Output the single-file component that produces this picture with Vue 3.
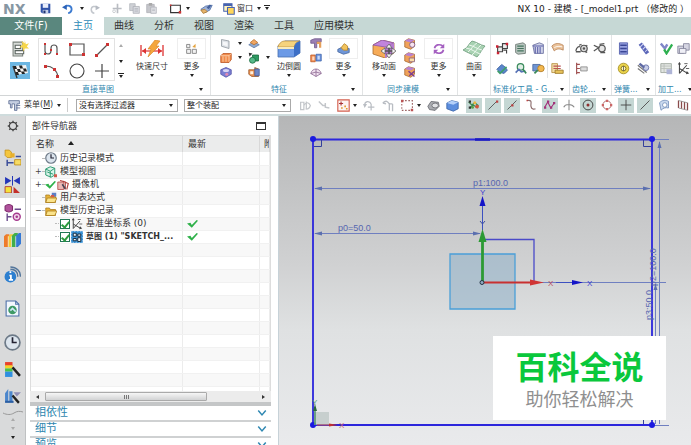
<script setup>
import { h, ref } from 'vue'

const glyphs = {
  save: '<path d="M1 1h14v14H3l-2-2z" fill="#2f52a8"/><path d="M4 1h8v6H4z" fill="#e9eefb"/><path d="M4 10h8v5H4z" fill="#c4cfe8"/><path d="M5 11h3v4H5z" fill="#1d3270"/>',
  undo: '<path d="M4 6c4-4 10-2 10 3 0 3-2 5-5 6" fill="none" stroke="#3b7ad0" stroke-width="2.6"/><path d="M0 6l7-4v8z" fill="#2b62b8"/>',
  redo: '<path d="M12 6C8 2 2 4 2 9c0 3 2 5 5 6" fill="none" stroke="#c3c7cd" stroke-width="2.4"/><path d="M16 6L9 2v8z" fill="#b5bac2"/>',
  cut: '<path d="M8 1v14M1 8h13" stroke="#b9bcc2" stroke-width="2.4"/><circle cx="3" cy="12" r="2" fill="none" stroke="#c9ccd0" stroke-width="1.4"/>',
  copy: '<path d="M1 1h8v10H1z" fill="#cfd1d6" stroke="#aeb1b8"/><path d="M6 5h9v10H6z" fill="#d9dbe0" stroke="#a6a9b0"/><path d="M8 8h5M8 10h5M8 12h5" stroke="#b0b3ba"/>',
  paste: '<path d="M1 2h11v12H1z" fill="#c5c6cb" stroke="#a9abb2"/><path d="M4 0h5v4H4z" fill="#aaa"/><path d="M7 6h8v9H7z" fill="#e2e3e7" stroke="#a9abb2"/><path d="M9 9h4M9 11h4" stroke="#b0b3ba"/>',
  rectTool: '<path d="M2 4h12v9H2z" fill="none" stroke="#333" stroke-width="1.4"/><path d="M1 3h2v2H1zM12 11h3v3h-3z" fill="#c33"/>',
  touch: '<path d="M1 9l6-4 8-1-3 6-6 3z" fill="#9fb3d8" stroke="#506fa8"/><path d="M1 10l5-1 3 3-5 2z" fill="#e7b56b" stroke="#a87a38"/><path d="M8 7l4-4 2 1-3 5z" fill="#45619c"/>',
  windows: '<path d="M1 1h11v10H1z" fill="#fff3bd" stroke="#4763b0" stroke-width="1.4"/><path d="M1 1h11v3H1z" fill="#4763b0"/><path d="M6 6h9v9H6z" fill="#ffd65a" stroke="#4763b0" stroke-width="1.4"/>',
  sketch: '<path d="M1 2h9v13H1z" fill="#d8dcd8" stroke="#7b827c"/><path d="M3 5h5v3H3zM3 10h8v3H3z" fill="#fff" stroke="#5c6560"/><path d="M12 0l1 4 3-1-2 3 2 2-4 0-1 3-1-4-3 0 3-3-1-3 3 2z" fill="#f6d64a"/>',
  flag: '<path d="M0 0h20v17H0z" fill="#6cb6e2"/><path d="M3 4l13-1 2 8-12 2z" fill="#f4f4f4"/><path d="M3 4l3 0 1 3-3 0zM9 3.500h3l1 3h-3zM7 7h3l1 3H8zM13 6.500h3l1 3h-3zM5 10h3l1 3H6zM11 9.500h3l1 2.500h-3z" fill="#222"/><path d="M3 4l4 12" stroke="#333" stroke-width="1.300"/>',
  profile: '<path d="M1 2v7c0 4 6 4 6 0V6c0-4 6-4 6 0v6" fill="none" stroke="#555" stroke-width="1.200"/><path d="M0 1h2v2H0zM0 11h2v2H0zM6 7h2v2H6zM12 11h2v2h-2z" fill="#c33"/>',
  rect: '<path d="M1 2h14v11H1z" fill="none" stroke="#555" stroke-width="1.200"/><path d="M0 1h3v3H0zM13 11h3v3h-3z" fill="#c33"/>',
  line: '<path d="M2 14L14 2" stroke="#555" stroke-width="1.200"/><path d="M1 12h3v3H1zM12 1h3v3h-3z" fill="#c33"/>',
  arc: '<path d="M2 3c6 0 11 4 12 11" fill="none" stroke="#555" stroke-width="1.200"/><path d="M0 2h3v3H0zM9 5h3v3H9zM12 12h3v3h-3z" fill="#c33"/>',
  circle: '<circle cx="8" cy="8" r="7" fill="none" stroke="#444" stroke-width="1.100"/>',
  plus: '<path d="M8 1v14M1 8h14" stroke="#444" stroke-width="1.200"/>',
  dim: '<path d="M1 5v11M23 5v11" stroke="#d33" stroke-width="1.300"/><path d="M2 11h20" stroke="#d33" stroke-width="1.200"/><path d="M2 11l4-3v6zM22 11l-4-3v6z" fill="#d33"/><path d="M15 0l5 1-4 5 3 0-11 11 3-8-3 0z" fill="#f4a63d" stroke="#d78222" stroke-width=".6"/>',
  more1: '<path d="M2 3h4v4H2zM2 9h5v5H2zM9 9h5v5H9z" fill="#f2f2f2" stroke="#777"/><path d="M9 6l4-4v5z" fill="#e4a23c"/>',
  more2: '<path d="M1 9l6-3 8 2v5l-7 2-7-3z" fill="#6f96d8" stroke="#47679e"/><path d="M5 7l4-5 4 3v5l-5 0z" fill="#f2c35c" stroke="#b58428"/>',
  more3: '<path d="M2 7c1-5 7-6 11-3M14 9c-1 5-7 6-11 3" fill="none" stroke="#a45fc0" stroke-width="2.200"/><path d="M15 1v6H9zM1 15V9h6z" fill="#a45fc0"/>',
  plane: '<path d="M2 2l10 2v10L2 11z" fill="#dfe3e8" stroke="#8a9098"/><path d="M4 5l6 1v5L4 9z" fill="#f6f7f9"/>',
  extrude: '<path d="M1 5l3-3h11v8l-3 4H1z" fill="#f08a4a" stroke="#b8501e"/><path d="M4 6v7M8 6v7M12 5v8M1 5h11l3-3" stroke="#ffe0c4" fill="none"/>',
  hole: '<path d="M1 5l7-3 7 3v6l-7 4-7-4z" fill="#7b7fd2" stroke="#4d4fa4"/><ellipse cx="8" cy="6" rx="4" ry="2" fill="#d9d7f5"/><circle cx="9" cy="11" r="2" fill="#e28bb4"/>',
  layer: '<path d="M1 9l7-4 7 4-7 4z" fill="#8fa9cf" stroke="#5b77a4"/><path d="M3 6l5-4 5 4-5 3z" fill="#f0a764" stroke="#b66d2c"/>',
  unite: '<path d="M6 4h8v8H6z" fill="#2d9a62" stroke="#14663a"/><circle cx="6" cy="11" r="4" fill="#57b98a" stroke="#14663a"/><path d="M1 1l5 1-4 4z" fill="#333"/>',
  shell: '<path d="M1 5h8V2l5 2v10H5l-4-3z" fill="#e58b4c" stroke="#9a5a2c"/><path d="M9 4h6v9H9z" fill="#6d86c6" stroke="#435a98"/><path d="M3 7h4v4H3z" fill="#fff1de"/>',
  edge: '<path d="M1 6l7-5h15v12l-6 4H1z" fill="#6c9ae6" stroke="#466fae" stroke-width=".8"/><path d="M1 6c3-5 5-5 8-5h14c-4 1-5 3-6 6H1z" fill="#f6d37d" stroke="#b4893c" stroke-width=".7"/><path d="M17 7c1-3 3-5 6-6v12l-6 4z" fill="#3c6fc6"/><path d="M1 7h16v2H1z" fill="#f9eabb"/>',
  draft: '<path d="M1 3l5-2h9v4H9v8H6V7H1z" fill="#9a7fb4" stroke="#6a5488"/><path d="M9 5h6v8h-3V8H9z" fill="#e5a05c"/>',
  mirror: '<path d="M1 4h6v9H1z" fill="#f08d54" stroke="#b8541e"/><path d="M8 3h7v9H8z" fill="#6b93dd" stroke="#3d63a8"/><path d="M3 6h3v5H3z" fill="#ffd9be"/><path d="M10 5h3v5h-3z" fill="#c8dafa"/>',
  tube: '<path d="M1 10c2-8 12-8 14 0l-7 4z" fill="#f1e2f0" stroke="#86608c"/><path d="M8 4v10M1 10l7-2 7 2" stroke="#86608c" fill="none"/>',
  move: '<path d="M1 5l9-5 12 3v10l-9 5-12-4z" fill="#f6ab58" stroke="#a86a2e" stroke-width=".8"/><path d="M1 5l9-5 12 3-9 4z" fill="#c184dc" stroke="#8d57a8" stroke-width=".8"/><path d="M13 7l9-4v10l-9 5z" fill="#b57ad0"/><path d="M11 11h12M17 5v12" stroke="#555" stroke-width="1.600"/><path d="M24 11l-4-3v6zM9 11l4-3v6zM17 4l-3 4h6zM17 18l-3-4h6z" fill="#f4f4f4" stroke="#555" stroke-width=".7"/>',
  cubeA: '<path d="M1 4l5-3 8 2v8l-5 4-8-3z" fill="#f0a25a" stroke="#a4652c"/><path d="M1 4l5-3 8 2-5 3z" fill="#b982d2"/><circle cx="11" cy="9" r="3.500" fill="#f7e3ee" stroke="#6d4a7c"/>',
  cubeB: '<path d="M1 4l5-3 8 2v8l-5 4-8-3z" fill="#f0a25a" stroke="#a4652c"/><path d="M1 4l5-3 8 2-5 3z" fill="#b982d2"/><path d="M7 8h7v5H7z" fill="#f9dca8" stroke="#80577e"/>',
  cubeC: '<path d="M1 4l5-3 8 2v8l-5 4-8-3z" fill="#f0a25a" stroke="#a4652c"/><path d="M1 4l5-3 8 2-5 3z" fill="#b982d2"/><path d="M6 7l8 7M14 7l-7 6" stroke="#7b3e90" stroke-width="2"/>',
  surface: '<path d="M1 10C6 8 7 3 10 1c5 1 8 4 13 5-3 3-5 8-8 11-5-3-9-4-14-7z" fill="#a8d2b2" stroke="#6c9b7b" stroke-width=".8"/><path d="M4 8c6 1 9 4 14 6M7 5c5 1 8 4 13 5M6 12c4-3 5-7 9-9M10 15c4-3 5-7 9-10" fill="none" stroke="#eef8f0"/>',
  g1: '<path d="M2 6h6v6H2zM8 2h6v6H8z" fill="#eee" stroke="#444" stroke-width="1.400"/><path d="M0 4h3v3H0zM12 1h3v3h-3zM1 12h3v3H1z" fill="#c23"/><path d="M9 10h4v4" stroke="#444" fill="none" stroke-width="1.400"/>',
  g2: '<path d="M2 3l9-2 3 2v11l-9 1-3-2z" fill="#b9c6c0" stroke="#66736c"/><path d="M4 5h8M4 8h8M4 11h8" stroke="#43735c" stroke-width="1.400"/>',
  g3: '<path d="M1 4l8-3 5 2v11H3z" fill="#cfd3e8" stroke="#666b9b"/><path d="M4 6v8M7 6v8M10 6v8M1 5h13" stroke="#5b5fa8" stroke-width="1.300"/>',
  g4: '<path d="M1 5c4-4 9-4 14-1v6c-4-2-8-2-11 1z" fill="#eac29a" stroke="#b98356"/><path d="M4 7c3-2 6-2 10-1" stroke="#fff" fill="none"/>',
  g5: '<path d="M1 9l6-6 4 3 3 4-4 4-5-1z" fill="#5a86cc" stroke="#3b5f9c"/><path d="M2 11l3 3 8-8" fill="none" stroke="#3fa06a" stroke-width="2"/>',
  g6: '<circle cx="8" cy="6" r="4" fill="#dfeee4" stroke="#37895a" stroke-width="1.500"/><path d="M2 13l4-4 3 3 5-1" stroke="#5772b5" stroke-width="2" fill="none"/><path d="M11 9l4 5" stroke="#37895a" stroke-width="2"/>',
  g7: '<path d="M1 3h9v8H1z" fill="#6f94d3" stroke="#45659c"/><circle cx="11" cy="8" r="4" fill="#f2b84f" stroke="#b07a24"/><path d="M3 14l4-4" stroke="#3a8a58" stroke-width="2.200"/>',
  g8: '<path d="M1 2h7v11H1z" fill="#f3dfa8" stroke="#b58b3a"/><path d="M3 5h9M3 8h9" stroke="#b55" stroke-width="1.400"/><path d="M5 10h10v4H5z" fill="#e7c25a" stroke="#997526"/>',
  gear: '<circle cx="11" cy="8" r="4" fill="#ddd" stroke="#555" stroke-width="1.500"/><circle cx="11" cy="8" r="1.500" fill="#555"/><path d="M1 11c1-4 3-6 5-5M5 4l3-1M14 4l1 1M13 13l2-1M1 12h6" stroke="#555" stroke-width="1.600" fill="none"/>',
  gear2: '<circle cx="11" cy="8" r="4" fill="#e6e6e6" stroke="#555" stroke-width="1.500"/><path d="M1 4l6 3-6 4M8 3l6-1M9 13h6" stroke="#555" stroke-width="1.600" fill="none"/>',
  rack: '<path d="M2 1v14M2 3h4M2 8h4M2 13h4" stroke="#a05050" stroke-width="1.400"/><path d="M7 6h8v5H7z" fill="#ddd" stroke="#888"/>',
  spring1: '<path d="M3 1h10v14H3z" fill="#98a2e0" stroke="#4b57a8"/><path d="M4 4h8M4 8h8M4 12h8" stroke="#3b4796" stroke-width="1.800"/>',
  spring2: '<path d="M4 2l9 12" stroke="#5b66b8" stroke-width="5"/><path d="M4 6l4-4M7 9l4-4M10 12l4-4" stroke="#d4d8f6" stroke-width="1.300"/>',
  spring3: '<circle cx="8" cy="8" r="6.500" fill="#e9d24c" stroke="#a18a1c"/><circle cx="8" cy="8" r="3" fill="#fff6b8" stroke="#72620f"/><path d="M8 5v6" stroke="#555"/>',
  spring4: '<path d="M1 4l11 9M1 8l8 6" stroke="#777" stroke-width="1.500"/><circle cx="11" cy="7" r="3.500" fill="#c7cde8" stroke="#5e69a4"/><path d="M3 2l6 5" stroke="#5e69a4" stroke-width="3"/>',
  vcheck: '<path d="M1 2l5 6 3-5" fill="none" stroke="#8187c8" stroke-width="3"/><path d="M5 9l3 5 7-11" fill="none" stroke="#2eb050" stroke-width="2.800"/>',
  parts: '<path d="M1 5h7v9H1zM8 2h7v8H8z" fill="#d5d5e2" stroke="#83839a"/><path d="M3 8h8v6H3z" fill="#efeff6" stroke="#83839a"/>',
  list: '<path d="M1 2h13v11H1z" fill="#e2e6e2" stroke="#98a098"/><path d="M1 5h13M1 8h13M5 2v11" stroke="#b7bdb7"/><path d="M8 9h7v6H8z" fill="#aeb4d6"/>',
  axes: '<path d="M3 1v13M3 14l9-10M3 8l10 6" stroke="#444" stroke-width="1.300" fill="none"/><path d="M1 3l2-3 2 3zM12 11l3 3-4 1z" fill="#444"/><path d="M9 2h4M11 8h4" stroke="#444"/>',
  menu: '<path d="M1 2h13v4h-3v8H8V6H5v5H3V6H1z" fill="#c7d0e2" stroke="#5d6d92"/><path d="M10 8h5M10 11h5" stroke="#5d6d92"/>',
  s1: '<path d="M2 4h4v9H2zM9 3v10M6 8c3-5 6-4 8 0-1 4-4 5-6 4" fill="none" stroke="#c3c6ca" stroke-width="1.500"/>',
  s2: '<path d="M1 3l5 5h3M9 5v5l5 1" fill="none" stroke="#c3c6ca" stroke-width="1.800"/>',
  s3: '<path d="M1 1h14v14H1z" fill="#fdf3f1" stroke="#d4604f" stroke-width="1.400"/><path d="M5 3v5M2.500 5.500h5" stroke="#a33" stroke-width="1.400"/><path d="M9 8h2v2H9zM11 11h2v2h-2zM5 10h2v2H5z" fill="#e09a2c"/>',
  s4: '<path d="M2 8c0-6 6-6 8-2M10 6v8M6 10h8" fill="none" stroke="#b9bdc3" stroke-width="1.500"/><path d="M0 6h5L2 11z" fill="#b9bdc3"/>',
  s5: '<path d="M1 5c4-4 6-2 8 1M1 5l4 1M9 5v9M13 6v9M9 6h4" fill="none" stroke="#b9bdc3" stroke-width="1.600"/>',
  s6: '<path d="M1 2h13v12H1z" fill="none" stroke="#9a6161" stroke-width="1.300" stroke-dasharray="2 2"/><path d="M0 1h3v3H0zM12 12h3v3h-3z" fill="#b55"/>',
  s7: '<path d="M1 9l4-6 9 1 1 5-5 5-7-1z" fill="#a9abb0" stroke="#66686e"/><ellipse cx="10" cy="8" rx="4" ry="3" fill="#e1e2e5" stroke="#66686e"/>',
  s8: '<path d="M1 5l6-3 8 2v8l-6 3-8-3z" fill="#5c8ede" stroke="#3762a8"/><path d="M1 5l6-3 8 2-6 3z" fill="#b4d0fa"/>',
  snap: '<path d="M1 4l4 4 4-3 5 4M2 12l5-4 6 4" stroke="#3b8a4e" stroke-width="1.600" fill="none"/><path d="M1 2h3v3H1zM1 10h3v3H1z" fill="#333"/><circle cx="9" cy="5" r="2" fill="#e9b93d"/><circle cx="12" cy="10" r="2.500" fill="#d4553d"/><circle cx="6" cy="11" r="2" fill="#5aa04c"/>',
  endpt: '<path d="M2 14L13 3" stroke="#555" stroke-width="1.200"/><path d="M12 2h3v3h-3z" fill="#b44"/>',
  midpt: '<path d="M2 14L14 2" stroke="#555" stroke-width="1.200"/><path d="M7 7h3v3H7z" fill="#b44"/>',
  ctrl: '<path d="M3 2c8-1 4 4 5 8s4 4 6 3" fill="none" stroke="#8a6a6a" stroke-width="1.500"/><path d="M2 1h2v2H2z" fill="#b44"/>',
  pole: '<path d="M1 11l4-7 4 8 5-7" fill="none" stroke="#a2327a" stroke-width="1.500"/><path d="M0 10h3v3H0zM4 2h3v3H4zM8 10h3v3H8zM12 4h3v3h-3z" fill="#a2327a"/>',
  inter: '<path d="M8 1v14M1 11c2-5 11-5 14 0" fill="none" stroke="#8a8a8a" stroke-width="1.400"/>',
  center: '<circle cx="8" cy="8" r="6.500" fill="none" stroke="#444" stroke-width="1.300"/><circle cx="8" cy="8" r="2" fill="#8e3030"/>',
  quad: '<circle cx="8" cy="8" r="5.500" fill="none" stroke="#a66" stroke-width="1.200"/><path d="M6.500 1h3v3h-3zM6.500 12h3v3h-3zM1 6.500h3v3H1zM12 6.500h3v3h-3z" fill="#c66"/>',
  face: '<path d="M2 5c4-4 8-4 12-2v9c-4-1-7 0-10 3z" fill="#c9d9ef" stroke="#6a87b4"/><circle cx="9" cy="8" r="3" fill="#fff" stroke="#6a87b4"/>',
  slash: '<path d="M2 14L14 2" stroke="#555" stroke-width="1.300"/>',
  grid: '<path d="M2 2v10M6 3v10M10 4v10M14 5v10" stroke="#8a4b4b" stroke-width="1.700"/><path d="M2 2l12 3M2 12l12 3" stroke="#888"/>',
  cog: '<circle cx="8" cy="8" r="4.800" fill="none" stroke="#444" stroke-width="1.600"/><path d="M8 1v2.500M8 12.500V15M1 8h2.500M12.500 8H15M3 3l2 2M11 11l2 2M13 3l-2 2M5 11l-2 2" stroke="#444" stroke-width="1.800"/>',
  asm: '<path d="M1 1h4l2 2v5H3L1 6z" fill="#f4c63e" stroke="#c08c17" stroke-width=".7"/><path d="M3 10v6M3 13h6M11 7h5" stroke="#3d4f9a" stroke-width="1.400"/><path d="M10 10h6v5h-6z" fill="#f6dc66" stroke="#c08c17" stroke-width=".8"/><path d="M6 4h4v4H6z" fill="#e8b02c"/>',
  constr: '<path d="M1 1l6 3.500L1 8zM15 1L9 4.500 15 8z" fill="#2335b8"/><path d="M8 0v9" stroke="#2335b8"/><path d="M1 10h6v6H1z" fill="#f4e23a" stroke="#a33" stroke-width=".8"/><path d="M9 10l6 6H9z" fill="#c4302a"/>',
  nav: '<path d="M1 2c2-2 5-2 7 0v4c-2 2-5 2-7 0z" fill="#b0529c" stroke="#7e2c6c"/><path d="M10 5h6M3 9v7M3 12h4" stroke="#6b4a8c" stroke-width="1.300"/><circle cx="12" cy="12" r="3.300" fill="#f1d6ea" stroke="#a63a8e" stroke-width="1.300"/><circle cx="12" cy="12" r="1.200" fill="#a63a8e"/>',
  books: '<path d="M0 4l2-2h3v12H0z" fill="#ee7b2a"/><path d="M4 4l2-2h4v12H4z" fill="#f0cc3a"/><path d="M7 4l3-3h3v13H7z" fill="#3fae4b"/><path d="M11 4l3-3h2v10l-3 3h-2z" fill="#3479d6"/><path d="M4 4v10M7 4v10M11 4v10" stroke="#fff" stroke-width=".6"/>',
  web: '<circle cx="6" cy="10" r="5.500" fill="#2c7fd0"/><path d="M6 5v1.500M5 9h1.500v4M4.500 13h4" stroke="#fff" stroke-width="1.700"/><path d="M6 3c5 0 7 3 7 7M6 1c6 0 9.500 4 9.500 9" stroke="#55779c" stroke-width="1.300" fill="none"/>',
  page: '<path d="M2 1h9l3 3v11H2z" fill="#f2f7fd" stroke="#4c6fa8"/><path d="M11 1v3h3" fill="none" stroke="#4c6fa8"/><circle cx="8" cy="9.500" r="4" fill="#3f9a66"/><path d="M6 10l2-2 3 3" stroke="#cfe8f7" stroke-width="1.500" fill="none"/>',
  clock: '<circle cx="8" cy="8" r="7" fill="#dce5ee" stroke="#6d7a88" stroke-width="1.600"/><path d="M8 3v5h4" fill="none" stroke="#223" stroke-width="1.600"/>',
  palette: '<path d="M1 1h7v4H1z" fill="#e8402c"/><path d="M1 4h7v3H1z" fill="#f3d32c"/><path d="M1 7h7v3H1z" fill="#49c148"/><path d="M1 10h7v5H1z" fill="#2f8fe0"/><path d="M8 6l7 8" stroke="#222" stroke-width="2.300"/>',
  tools: '<path d="M1 13V5l3-4v12zM5 13V3h3v10z" fill="#4b86cc"/><path d="M9 4h7l-4 4z" fill="#8f8fb8"/><path d="M8 7l6 7" stroke="#222" stroke-width="2.200"/><path d="M1 13h8" stroke="#2c5fa4" stroke-width="2"/>',
  view: '<path d="M1 4l6-3 6 2v9l-5 3-7-3z" fill="#d9f3e8" stroke="#2c9a72" stroke-width="1.300"/><path d="M1 4l6 3 6-4M7 7v8M3 8l8 3" fill="none" stroke="#2c9a72" stroke-width="1.300"/><path d="M12 11h4v4h-4z" fill="#d25a4c"/>',
  camera: '<path d="M1 4h8v10H1z" fill="#e9b7b5" stroke="#b0403c"/><path d="M4 2l7 2v10M8 3l7 3-2 8" fill="none" stroke="#b0403c" stroke-width="1.500"/><path d="M7 7l4 6" stroke="#445" stroke-width="2"/>',
  folder: '<path d="M1 4h5l1 2h7v8H1z" fill="#e9b53a" stroke="#a87a1a"/><path d="M3 8h13l-3 6H1z" fill="#fbe38a" stroke="#a87a1a"/>',
  expr: '<path d="M1 4h5l1 2h7v8H1z" fill="#e9b53a" stroke="#a87a1a"/><path d="M3 8h13l-3 6H1z" fill="#fbe38a" stroke="#a87a1a"/><path d="M9 1h6v5H9z" fill="#5d7fc4"/><path d="M8 4h4v3H8z" fill="#d25a4c"/>',
  skt: '<path d="M0 0h16v16H0z" fill="#3b91d4"/><path d="M3 3h4v4H3zM9 4h4v3H9zM3 10h4v3H3zM9 9h4v5H9z" fill="#e9f4fc" stroke="#123" stroke-width="1.200"/><path d="M0 0h16v16H0z" fill="none" stroke="#fff" stroke-dasharray="2 2"/>',
  tick: '<path d="M0 8l5-1 2 3 7-7 2 1-9 10z" fill="#2fb14a"/>',
  chev: '<path d="M2 4l6 7 6-7" fill="none" stroke="#2f88b2" stroke-width="2.400"/>',
}

const Icon = (p) =>
  h('svg', {
    width: p.w || 12,
    height: p.h || p.w || 12,
    viewBox: p.box || '0 0 16 16',
    'aria-hidden': 'true',
    innerHTML: glyphs[p.name],
  })
Icon.props = ['name', 'w', 'h', 'box']

const tabs = ['主页', '曲线', '分析', '视图', '渲染', '工具', '应用模块']
const active = ref('主页')

const gallery = ['profile', 'rect', 'line', 'arc', 'circle', 'plus']
const smallGroups = [
  { id: 'std', label: '标准化工具 - G...', cells: ['g1', 'g2', 'g3', 'g4', 'g5', 'g6', 'g7', 'g8'] },
  { id: 'gears', label: '齿轮...', cells: ['gear', 'gear2', 'rack'] },
  { id: 'springs', label: '弹簧...', cells: ['spring1', 'spring2', 'spring3', 'spring4'] },
  { id: 'mach', label: '加工...', cells: ['vcheck', 'parts', 'list', 'axes'] },
]
const filters = [
  { icon: 's1', label: '重置过滤器' },
  { icon: 's2', label: '全不选' },
  { icon: 's3', label: '常规选择', menu: true },
  { icon: 's4', label: '上一个' },
  { icon: 's5', label: '查找' },
  { icon: 's6', label: '矩形选择', menu: true },
  { icon: 's7', label: '高亮隐藏边' },
  { icon: 's8', label: '着色' },
]
const snaps = [
  ['snap', 1], ['endpt', 1], ['midpt', 1], ['ctrl', 0], ['pole', 1], ['inter', 0],
  ['center', 1], ['quad', 0], ['plus', 1], ['slash', 1], ['face', 0], ['grid', 0],
]
const rail = ['cog', 'asm', 'constr', 'nav', 'books', 'web', 'page', 'clock', 'palette', 'tools']
const rows = [
  { icon: 'clock', text: '历史记录模式', mark: '' },
  { icon: 'view', text: '模型视图', mark: '+' },
  { icon: 'camera', text: '摄像机', mark: '+', tick: true },
  { icon: 'expr', text: '用户表达式', mark: '' },
  { icon: 'folder', text: '模型历史记录', mark: '−' },
  { icon: 'axes', text: '基准坐标系 (0)', child: true },
  { icon: 'skt', text: '草图 (1) "SKETCH_...', child: true, bold: true },
]
const sections = ['相依性', '细节', '预览']
</script>

<template>
  <div class="app">
    <header class="title">
      <span class="logo">NX</span>
      <div class="quick">
        <button aria-label="保存"><Icon name="save" w="11" /></button>
        <button aria-label="撤销"><Icon name="undo" w="11" /><i class="caret" /></button>
        <button aria-label="重做"><Icon name="redo" w="10" /></button>
        <button aria-label="剪切"><Icon name="cut" w="11" /></button>
        <button aria-label="复制"><Icon name="copy" w="11" /></button>
        <button aria-label="粘贴"><Icon name="paste" w="11" /></button>
        <button aria-label="矩形"><Icon name="rectTool" w="13" /><i class="caret" /></button>
        <button aria-label="触控"><Icon name="touch" w="13" /></button>
        <button class="win"><Icon name="windows" w="12" /><span>窗口</span><i class="caret" /><i class="caret lined" /></button>
      </div>
      <h1>NX 10 - 建模 - [_model1.prt （修改的 ）</h1>
    </header>

    <nav class="tabs">
      <button class="file">文件(F)</button>
      <button v-for="t in tabs" :key="t" :class="{ on: t === active }" @click="active = t">{{ t }}</button>
    </nav>

    <div class="ribbon">
      <section class="group direct">
        <div class="tools">
          <div class="stack two">
            <button aria-label="草图"><Icon name="sketch" w="17" /></button>
            <button aria-label="完成草图"><Icon name="flag" w="20" h="17" box="0 0 20 17" /></button>
          </div>
          <div class="gallery">
            <button v-for="g in gallery" :key="g" :aria-label="g"><Icon :name="g" w="16" /></button>
          </div>
          <div class="scroll"><i class="caret up" /><i class="caret" /><i class="caret lined" /></div>
          <button class="big"><Icon name="dim" w="24" h="18" box="0 0 24 18" />快速尺寸<i class="caret" /></button>
          <button class="big more"><span><Icon name="more1" w="13" /></span>更多<i class="caret" /></button>
        </div>
        <footer>直接草图<i class="caret" /></footer>
      </section>

      <section class="group feature">
        <div class="tools">
          <div class="stack">
            <button aria-label="基准平面"><Icon name="plane" /><i class="caret" /></button>
            <button aria-label="拉伸"><Icon name="extrude" /><i class="caret" /></button>
            <button aria-label="孔"><Icon name="hole" /></button>
          </div>
          <div class="stack">
            <button aria-label="阵列"><Icon name="layer" /></button>
            <button aria-label="合并"><Icon name="unite" /><i class="caret" /></button>
            <button aria-label="抽壳"><Icon name="shell" /></button>
          </div>
          <button class="big"><Icon name="edge" w="24" h="18" box="0 0 24 18" />边倒圆<i class="caret" /></button>
          <div class="stack">
            <button aria-label="拔模"><Icon name="draft" /></button>
            <button aria-label="镜像"><Icon name="mirror" /></button>
            <button aria-label="管"><Icon name="tube" /></button>
          </div>
          <button class="big more"><span><Icon name="more2" w="13" /></span>更多<i class="caret" /></button>
        </div>
        <footer>特征<i class="caret" /></footer>
      </section>

      <section class="group sync">
        <div class="tools">
          <button class="big"><Icon name="move" w="24" h="18" box="0 0 24 18" />移动面<i class="caret" /></button>
          <div class="stack">
            <button aria-label="偏置"><Icon name="cubeA" /></button>
            <button aria-label="替换"><Icon name="cubeB" /></button>
            <button aria-label="删除"><Icon name="cubeC" /></button>
          </div>
          <button class="big more"><span><Icon name="more3" w="12" /></span>更多<i class="caret" /></button>
        </div>
        <footer>同步建模<i class="caret" /></footer>
      </section>

      <section class="group surf">
        <div class="tools">
          <button class="big"><Icon name="surface" w="24" h="18" box="0 0 24 18" />曲面<i class="caret" /></button>
        </div>
      </section>

      <section v-for="g in smallGroups" :key="g.id" class="group small" :class="g.id">
        <div class="tools">
          <button v-for="c in g.cells" :key="c" :aria-label="c"><Icon :name="c" w="13" /></button>
        </div>
        <footer>{{ g.label }}<i class="caret" /></footer>
      </section>
    </div>

    <div class="selection">
      <button class="menu"><Icon name="menu" w="13" />菜单(<u>M</u>)<i class="caret" /></button>
      <label class="pick"><select aria-label="过滤器"><option>没有选择过滤器</option></select><i class="caret" /></label>
      <label class="pick"><select aria-label="范围"><option>整个装配</option></select><i class="caret" /></label>
      <div class="filters">
        <button v-for="f in filters" :key="f.icon" :aria-label="f.label"><Icon :name="f.icon" w="13" /><i v-if="f.menu" class="caret" /></button>
      </div>
      <div class="snaps">
        <button v-for="s in snaps" :key="s[0]" :class="{ on: s[1] }" :aria-label="s[0]"><Icon :name="s[0]" w="12" /></button>
      </div>
    </div>

    <main>
      <aside class="rail">
        <button v-for="r in rail" :key="r" :class="['r-' + r]" :aria-label="r"><Icon :name="r" :w="r === 'cog' ? 12 : 17" /></button>
        <svg class="wave" width="22" height="5" viewBox="0 0 22 5"><path d="M1 3c4 2 8 2 11 0s6-2 9-1" fill="none" stroke="#999" /></svg>
        <i class="caret up" /><i class="caret dim" /><i class="caret" />
      </aside>

      <section class="panel">
        <h2>部件导航器<button class="dock" aria-label="停靠" /></h2>
        <div class="tree">
          <table>
            <colgroup><col /><col class="c2" /><col class="c3" /></colgroup>
            <thead>
              <tr><th>名称<i class="caret sort" /></th><th>最新</th><th>附</th></tr>
            </thead>
            <tbody>
              <tr v-for="r in rows" :key="r.text">
                <td>
                  <div class="node" :class="{ child: r.child, bold: r.bold }">
                    <span v-if="!r.child" class="mark">{{ r.mark }}</span>
                    <span class="twig" />
                    <input v-if="r.child" type="checkbox" checked :aria-label="r.text" />
                    <Icon v-if="r.tick" name="tick" w="11" />
                    <Icon :name="r.icon" w="12" />
                    <span class="name">{{ r.text }}</span>
                  </div>
                </td>
                <td><Icon v-if="r.child" name="tick" w="11" /></td>
                <td></td>
              </tr>
              <tr v-for="n in 14" :key="n"><td></td><td></td><td></td></tr>
            </tbody>
          </table>
        </div>
        <div class="hbar"><i class="side left" /><div class="track"><span class="thumb"><b /><b /><b /></span></div><i class="side right" /></div>
        <div class="sections">
          <button v-for="s in sections" :key="s">{{ s }}<Icon name="chev" w="10" /></button>
        </div>
      </section>

      <section class="view">
        <svg class="canvas" viewBox="279 116 412 329" preserveAspectRatio="xMinYMin meet">
          <g fill="none" stroke="#6f7fc0" stroke-width="1">
            <path d="M315 188.500H650M315 233.500H480M484 282.500H666M655.500 284V424M659.500 142V424M654 139.500h15M654 425.500h15" />
          </g>
          <path d="M450 254h65v55h-65z" fill="#8fb0c8" fill-opacity=".55" stroke="#4a9fd8" stroke-width="1.300" />
          <path d="M484 239.500h50V282" fill="none" stroke="#4a4ac8" stroke-width="1.300" />
          <g fill="#5b6fae">
            <path d="M314 188.500l8-2v4zM651 188.500l-8-2v4zM314 233.500l8-2v4zM481 233.500l-8-2v4zM659.500 141l-2 7h4zM655.500 284l-2 6h4z" />
          </g>
          <path d="M313 139.500H652V425H313z" fill="none" stroke="#2c26dc" stroke-width="1.800" />
          <path d="M475 139.500h15" stroke="#1a1ac0" stroke-width="2.500" />
          <path d="M321.500 140v6.500H314M643.500 140v6.500H651M643.500 424v-7" fill="none" stroke="#34409c" />
          <g fill="#1a1ae0"><circle cx="313" cy="139" r="3" /><circle cx="652" cy="139" r="3" /><circle cx="313" cy="425" r="3" /><circle cx="652" cy="425" r="3" /></g>
          <g class="dims">
            <text x="473" y="186">p1:100.0</text>
            <text x="338" y="231">p0=50.0</text>
            <text transform="translate(656 286) rotate(-90)">p2=100.0</text>
            <text transform="translate(652 320) rotate(-90)">p3:50.0</text>
          </g>
          <path d="M482.500 230V204" stroke="#3c50c0" /><path d="M482.500 196l-3 10h6z" fill="#1414c8" />
          <path d="M480 221l2.500 3 2.500-3" fill="none" stroke="#3c50a0" />
          <path d="M482.500 282V240" stroke="#2c9a34" stroke-width="2.800" /><path d="M482.500 229l-4 13h8z" fill="#2c9a34" />
          <path d="M483 282.500h50" stroke="#c83030" stroke-width="1.800" /><path d="M544 282.500l-14-3v6z" fill="#d03434" />
          <path d="M556 282.500h17" stroke="#3c50c0" /><path d="M583 282.500l-11-2.500v5z" fill="#1414c8" />
          <circle cx="482" cy="282.500" r="2" fill="#8fa9c0" stroke="#234" />
          <g class="axis">
            <text x="480" y="195" fill="#3a3ad0">Y</text><text x="587" y="286" fill="#3a3ad0">X</text><text x="548" y="286" fill="#b84a5c">X</text>
            <text x="312" y="405" fill="#5a9a74">Y</text><text x="339" y="428" fill="#c06070">X</text>
          </g>
          <path d="M314 412h15v13h-15z" fill="#b9c4c2" fill-opacity=".7" />
          <path d="M315 425v-18" stroke="#3c8a5a" stroke-width="1.300" /><path d="M315 404l-2 7h4z" fill="#2c6a3c" />
          <path d="M317 425h14" stroke="#c05050" /><path d="M338 425l-9-1.500v3z" fill="#c03030" />
        </svg>
        <div class="brand"><strong>百科全说</strong><span>助你轻松解决</span></div>
      </section>
    </main>
  </div>
</template>

<style>
body { overflow: hidden; }
</style>

<style scoped>
.app {
  display: flex; flex-direction: column; height: 100vh; background: #fff; color: #333;
  font: 9px/12px "DejaVu Sans", "Noto Sans CJK SC", sans-serif;
}
.app * { box-sizing: border-box; }
button { display: flex; align-items: center; justify-content: center; border: 0; padding: 0; margin: 0; background: none; font: inherit; color: inherit; white-space: nowrap; }
svg { display: block; flex: none; }
.caret { flex: none; width: 0; height: 0; border: 2px solid transparent; border-top: 3px solid #222; border-bottom: 0; }
.caret.up { border-top: 0; border-bottom: 3px solid #aaa; }
.caret.dim { border-top-color: #aaa; }
.caret.lined { position: relative; }
.caret.lined::before { content: ""; position: absolute; left: -3px; top: -5px; width: 6px; height: 1px; background: #222; }

.title { display: flex; align-items: center; height: 17px; padding: 0 2px 0 3px; flex: none; }
.logo { width: 37px; font: bold 14px/16px "DejaVu Sans", sans-serif; color: #8797a3; }
.quick { display: flex; align-items: center; }
.quick button { margin-right: 6px; gap: 7px; }
.quick button:first-child { margin-right: 11px; }
.quick button:nth-child(3) { margin-right: 12px; }
.quick button:nth-child(6) { margin-right: 12px; }
.quick button:nth-child(7) { margin-right: 10px; gap: 4px; }
.quick button:nth-child(8) { margin-right: 10px; }
.quick .win { gap: 4px; font-size: 8px; }
.win svg { margin-right: -2px; }
h1 { margin: 0 0 0 auto; font: 9px/12px "DejaVu Sans", "Noto Sans CJK SC", sans-serif; white-space: nowrap; color: #222; }

.tabs { display: flex; height: 18px; flex: none; background: #c6d8d5; font-size: 10px; color: #333; }
.tabs button { padding: 0 10px; }
.tabs .file { width: 62px; background: #5a877e; color: #fff; padding: 0; }
.tabs .on { background: #fff; color: #2d8ab8; padding: 0 11px; }

.ribbon { display: flex; height: 61px; flex: none; border-bottom: 1px solid #d2d5d6; overflow: hidden; font-size: 8px; }
.group { display: flex; flex-direction: column; flex: none; border-right: 1px solid #e2e4e5; padding-top: 2px; }
.tools { display: flex; height: 47px; }
.group footer { display: flex; align-items: center; justify-content: space-between; height: 11px; color: #2f86ae; line-height: 11px; white-space: nowrap; padding-right: 7px; }
.stack { display: flex; flex-direction: column; gap: 1px; }
.stack button { justify-content: flex-start; gap: 6px; height: 13px; }
.stack.two { gap: 3px; padding-top: 2px; width: 20px; }
.stack.two button { height: 19px; justify-content: center; }
.big { flex-direction: column; justify-content: flex-start; padding-top: 3px; }
.big svg { margin-bottom: 3px; }
.big .caret { margin-top: 1px; }
.big.more { padding-top: 1px; }
.big.more span { display: flex; align-items: center; justify-content: center; width: 29px; height: 21px; margin-bottom: 2px; border: 1px solid #eee; }
.big.more svg { margin: 0; }
.direct { width: 211px; }
.direct .tools { padding-left: 10px; }
.gallery { display: grid; grid-template-columns: repeat(3, 25px); grid-template-rows: 21px 21px; margin: 1px 4px 0 8px; height: 43px; border: 1px solid #e2e2e2; }
.scroll { display: flex; flex-direction: column; justify-content: space-between; padding: 7px 0 6px; margin-right: 13px; }
.direct .more { margin-left: 9px; }
.direct footer { padding-left: 82px; }
.feature { width: 152px; }
.feature .tools { padding-left: 9px; gap: 9px; }
.feature .stack { min-width: 12px; }
.feature .stack:first-child { width: 19px; }
.feature .stack:nth-child(2) { width: 20px; }
.feature .stack + .big.more { margin-left: -2px; }
.feature footer { padding-left: 60px; }
.sync { width: 95px; }
.sync .tools { padding-left: 9px; gap: 8px; }
.sync footer { padding-left: 24px; }
.surf { width: 33px; align-items: center; }
.small .tools { display: grid; grid-template-rows: 20px 20px; padding: 1px 2px 0; align-content: start; }
.small footer { padding-left: 2px; padding-right: 5px; }
.std { width: 79px; }
.std .tools { grid-template-columns: 18px 18px 18px 1fr; }
.std .tools button:nth-child(4n) { border-left: 1px solid #e2e4e5; }
.gears { width: 42px; }
.springs { width: 44px; }
.gears .tools, .springs .tools, .mach .tools { grid-template-columns: 1fr 1fr; }
.mach { width: 38px; border-right: 0; }
.mach footer { padding-right: 2px; }

.selection { display: flex; align-items: center; height: 20px; flex: none; border-bottom: 2px solid #cfdcdd; padding-left: 8px; font-size: 8px; }
.menu { width: 60px; justify-content: flex-start; height: 14px; border-right: 1px solid #ccc; margin-right: 8px; }
.menu svg { margin-right: 3px; }
.menu .caret { margin-left: 4px; }
.pick { position: relative; display: flex; width: 102px; height: 13px; margin-right: 6px; }
.pick + .pick { width: 107px; margin-right: 8px; }
.pick select { appearance: none; width: 100%; border: 1px solid #aaa; border-radius: 0; background: #fff; padding: 0 2px; font: 8px/11px "DejaVu Sans", "Noto Sans CJK SC", sans-serif; color: #222; }
.pick .caret { position: absolute; right: 5px; top: 5px; pointer-events: none; }
.filters { display: flex; gap: 6px; width: 167px; }
.filters button { gap: 3px; }
.snaps { display: flex; gap: 3px; }
.snaps button { width: 16px; height: 15px; }
.snaps .on { background: #c5d7d4; }

main { flex: 1; display: flex; min-height: 0; overflow: hidden; }
.rail { width: 26px; flex: none; display: flex; flex-direction: column; align-items: center; background: #d9dadb; border-right: 1px solid #bfc1c2; overflow: hidden; }
.rail button { width: 25px; height: 27px; flex: none; }
.rail .r-cog { height: 20px; margin-bottom: 8px; }
.rail .r-nav { height: 29px; background: #fff; }
.rail .r-web, .rail .r-page, .rail .r-clock { margin-top: 7px; }
.wave { margin-bottom: 3px; }
.rail .caret { margin-bottom: 6px; }

.panel { flex: 0 0 253px; display: flex; flex-direction: column; padding: 0 7px 0 4px; border-right: 1px solid #c7d2d8; min-height: 0; }
h2 { display: flex; align-items: center; justify-content: space-between; margin: 0; height: 19px; flex: none; padding: 0 5px 0 2px; font: 9px/12px "DejaVu Sans", "Noto Sans CJK SC", sans-serif; }
.dock { width: 10px; height: 8px; border: 1px solid #333; border-top-width: 2px; }
.tree { flex: 1; min-height: 0; overflow: hidden; border: 1px solid #ddd; border-bottom: 0; }
table { width: 100%; table-layout: fixed; border-collapse: collapse; }
.c2 { width: 77px; }
.c3 { width: 10px; }
th { height: 16px; padding: 0 5px; background: #ebecec; border-right: 1px solid #d8d8d8; font-weight: normal; text-align: left; overflow: hidden; white-space: nowrap; }
th:last-child { padding: 0 0 0 4px; }
.caret.sort { display: inline-block; margin: 0 0 2px 14px; border: 3px solid transparent; border-top: 0; border-bottom: 4px solid #222; }
td { height: 13px; padding: 0 0 0 4px; border-right: 1px solid #ececec; overflow: hidden; line-height: 11px; border-bottom: 1px solid #f1f1f1; }
tr:nth-child(even) td { background: #f8f8f8; }
.node { display: flex; align-items: center; height: 12px; gap: 1px; white-space: nowrap; }
.mark { width: 6px; font-size: 8px; text-align: left; color: #444; }
.twig { width: 2px; border-top: 1px dotted #bbb; }
.child { padding-left: 20px; }
.child .twig { width: 4px; flex: none; }
.bold { font-weight: bold; font-size: 8px; }
.name { margin-left: 2px; }
input[type="checkbox"] { appearance: none; flex: none; width: 10px; height: 10px; margin: 0; border: 1px solid #275; background: #fff; position: relative; }
input[type="checkbox"]:checked::after { content: ""; position: absolute; left: 2px; top: 0; width: 3px; height: 6px; border: solid #2b9a3e; border-width: 0 2px 2px 0; transform: rotate(40deg); }
.hbar { display: flex; align-items: center; height: 11px; flex: none; background: #ececec; padding: 0 6px; gap: 6px; }
.side { border: 2px solid transparent; }
.side.left { border-right: 3px solid #333; border-left: 0; }
.side.right { border-left: 3px solid #333; border-right: 0; }
.track { flex: 1; }
.thumb { display: flex; align-items: center; justify-content: center; gap: 1px; width: 77%; height: 9px; border: 1px solid #aaa; border-radius: 1px; background: linear-gradient(#f6f6f6, #d2d3d4); }
.thumb b { width: 1px; height: 4px; background: #777; }
.sections { height: 43px; flex: none; overflow: hidden; border-top: 4px solid #c4c6c7; }
.sections button { width: 100%; height: 16px; justify-content: space-between; padding: 0 4px 0 5px; border-bottom: 2px solid #cfd1d2; color: #2f86ae; font-size: 11px; line-height: 14px; }

.view { flex: 1; position: relative; min-width: 0; overflow: hidden; background: linear-gradient(#b5b6b7, #d0d1d2 45%, #dfe1e2 65%, #e9eaec); }
.canvas { width: 100%; }
.dims text { font: 9px "Liberation Sans", sans-serif; fill: #5666b0; }
.axis text { font: 8px "Liberation Sans", sans-serif; }
.brand { position: absolute; right: 25px; bottom: 25px; display: flex; flex-direction: column; align-items: center; justify-content: center; width: 173px; height: 84px; padding-top: 2px; background: #fff; font-family: "Noto Sans CJK SC", sans-serif; }
.brand strong { font-size: 32px; line-height: 38px; font-weight: 700; color: #0ac83c; }
.brand span { font-size: 18px; line-height: 28px; color: #8f8f8f; }
</style>
